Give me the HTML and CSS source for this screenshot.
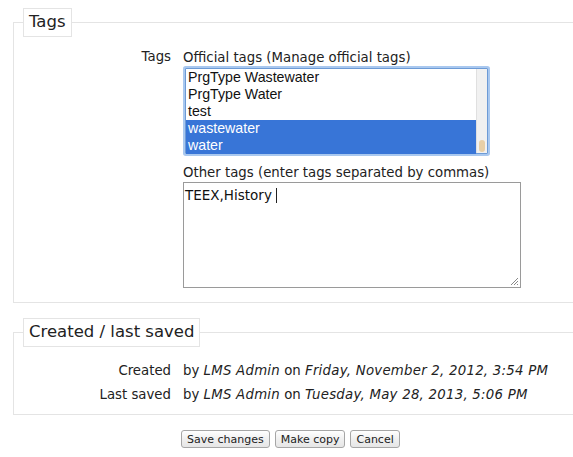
FILE: index.html
```html
<!DOCTYPE html>
<html>
<head>
<meta charset="utf-8">
<link rel="stylesheet" href="styles.css">
</head>
<body>
<form class="mform">
  <fieldset class="fs fs-tags">
    <legend class="lg">Tags</legend>
    <div class="row">
      <div class="lbl">Tags</div>
      <div class="fld">
        <div class="cap">Official tags (Manage official tags)</div>
        <div class="sel">
          <div class="opts">
            <div class="opt">PrgType Wastewater</div>
            <div class="opt">PrgType Water</div>
            <div class="opt">test</div>
            <div class="opt on">wastewater</div>
            <div class="opt on">water</div>
          </div>
          <div class="sb"><div class="thumb"></div></div>
        </div>
        <div class="cap cap2">Other tags (enter tags separated by commas)</div>
        <div class="ta">TEEX,History <span class="caret"></span>
          <svg class="grip" width="8" height="8" viewBox="0 0 8 8"><path d="M1 8L8 1M4 8L8 4M7 8L8 7" stroke="#888" stroke-width="1"/></svg>
        </div>
      </div>
    </div>
  </fieldset>
  <fieldset class="fs fs-saved">
    <legend class="lg">Created / last saved</legend>
    <div class="row srow">
      <div class="lbl">Created</div>
      <div class="fld">by <i>LMS Admin</i> on <i>Friday, November 2, 2012, 3:54 PM</i></div>
    </div>
    <div class="row srow">
      <div class="lbl">Last saved</div>
      <div class="fld">by <i>LMS Admin</i> on <i>Tuesday, May 28, 2013, 5:06 PM</i></div>
    </div>
  </fieldset>
  <div class="btns">
    <button type="button" class="btn">Save changes</button>
    <button type="button" class="btn">Make copy</button>
    <button type="button" class="btn">Cancel</button>
  </div>
</form>
</body>
</html>
```
FILE: styles.css
```css
html, body { background: #fff; }
body {
  margin: 8px 0 0 13px;
  font-family: "DejaVu Sans", sans-serif;
  font-size: 13.3px;
  color: #222;
  overflow: hidden;
}
.mform { width: 600px; }
.fs {
  border: 1px solid #e4e4e4;
  margin: 0 0 15px 0;
  padding: 0;
  min-width: 0;
}
.lg {
  margin-left: 9px;
  padding: 3px 5px 4px;
  border: 1px solid #e4e4e4;
  font-size: 16.5px;
  line-height: 20px;
  color: #222;
}
.row { display: flex; }
.lbl { width: 157px; text-align: right; flex: none; }
.fld { margin-left: 12px; }
.fs-tags .row { padding-top: 12px; padding-bottom: 14px; }
.cap { line-height: 18px; }
.sel {
  margin: 1px 0 0 2px;
  width: 301px;
  height: 84px;
  border: 1px solid #6d9bd6;
  box-shadow: 0 0 0 2px #a9c8ef;
  border-radius: 1px;
  display: flex;
  background: #fff;
}
.opts { flex: 1; }
.opt {
  font-family: "Liberation Sans", Arial, sans-serif;
  font-size: 14.2px;
  height: 17px;
  line-height: 16px;
  padding-left: 2px;
  color: #111;
}
.opt.on { background: #3875d7; color: #fff; }
.sb {
  width: 10px;
  background: #f1f1f1;
  border-left: 1px solid #e0e0e0;
  display: flex;
  flex-direction: column;
  justify-content: flex-end;
}
.thumb {
  height: 12px;
  margin: 0 2px 1px;
  background: #e8cfa6;
  border-radius: 3px;
}
.cap2 { margin-top: 10px; }
.ta {
  position: relative;
  width: 334px;
  height: 100px;
  border: 1px solid #9a9a9a;
  padding: 3px 1px 1px;
  font-size: 13.5px;
  line-height: 18px;
  color: #111;
}
.caret {
  display: inline-block;
  width: 1px;
  height: 15px;
  background: #222;
  vertical-align: -3px;
}
.grip { position: absolute; right: 2px; bottom: 2px; }
.fs-saved { padding: 12px 0 7px; }
.srow { line-height: 24px; }
.srow i { letter-spacing: 0.25px; }
.btns { padding-left: 168px; margin-top: 2px; display: flex; gap: 5px; }
.btn {
  font-family: "DejaVu Sans", sans-serif;
  font-size: 11px;
  color: #222;
  height: 18px;
  padding: 0 5px;
  border: 1px solid #a6a6a6;
  border-radius: 3px;
  background: linear-gradient(#ffffff, #f0f0f0 50%, #e6e6e6);
  line-height: 15px;
}
```
